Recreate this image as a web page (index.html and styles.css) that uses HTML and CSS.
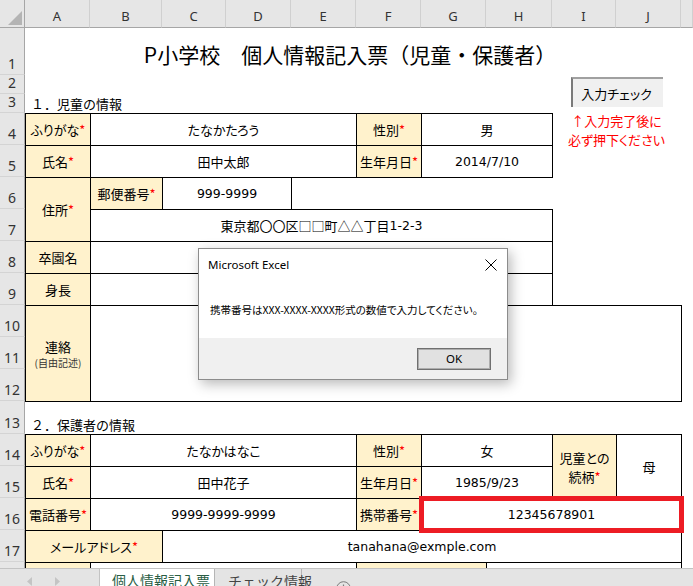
FILE: index.html
```html
<!DOCTYPE html>
<html lang="ja">
<head>
<meta charset="utf-8">
<title>個人情報記入票</title>
<link rel="stylesheet" href="styles.css">
</head>
<body>
<div class="app">
  <div class="sheet">
    <div class="grid">
      <div class="corner c0 rh"><span class="tri"></span></div>
      <div class="colhead cA rh">A</div>
      <div class="colhead cB rh">B</div>
      <div class="colhead cC rh">C</div>
      <div class="colhead cD rh">D</div>
      <div class="colhead cE rh">E</div>
      <div class="colhead cF rh">F</div>
      <div class="colhead cG rh">G</div>
      <div class="colhead cH rh">H</div>
      <div class="colhead cI rh">I</div>
      <div class="colhead cJ rh">J</div>
      <div class="colhead cK rh"></div>

      <div class="rownum c0 r1">1</div>
      <div class="rownum c0 r2">2</div>
      <div class="rownum c0 r3">3</div>
      <div class="rownum c0 r4">4</div>
      <div class="rownum c0 r5">5</div>
      <div class="rownum c0 r6">6</div>
      <div class="rownum c0 r7">7</div>
      <div class="rownum c0 r8">8</div>
      <div class="rownum c0 r9">9</div>
      <div class="rownum c0 r10">10</div>
      <div class="rownum c0 r11">11</div>
      <div class="rownum c0 r12">12</div>
      <div class="rownum c0 r13">13</div>
      <div class="rownum c0 r14">14</div>
      <div class="rownum c0 r15">15</div>
      <div class="rownum c0 r16">16</div>
      <div class="rownum c0 r17">17</div>
      <div class="rownum c0 r18"></div>
      <div class="rownum c0 r19"></div>

      <div class="title cA s10 r1">P小学校　個人情報記入票（児童・保護者）</div>

      <div class="notebox cI s2 r2 t4">
        <div class="checkbtn">入力チェック</div>
        <div class="note">↑入力完了後に<br>必ず押下ください</div>
      </div>

      <div class="section cA s8 r3">１．児童の情報</div>

      <div class="lab cA r4">ふりがな<span class="req">*</span></div>
      <div class="val cB s4 r4">たなかたろう</div>
      <div class="lab cF r4">性別<span class="req">*</span></div>
      <div class="val cG s2 r4">男</div>

      <div class="lab cA r5">氏名<span class="req">*</span></div>
      <div class="val cB s4 r5">田中太郎</div>
      <div class="lab cF r5">生年月日<span class="req">*</span></div>
      <div class="val lat cG s2 r5">2014/7/10</div>

      <div class="lab cA r6 t2">住所<span class="req">*</span></div>
      <div class="lab cB r6">郵便番号<span class="req">*</span></div>
      <div class="val lat cC s2 r6">999-9999</div>
      <div class="val cB s7 r7">東京都〇〇区□□町△△丁目<span class="latin">1-2-3</span></div>

      <div class="lab cA r8">卒園名</div>
      <div class="val cB s7 r8"></div>

      <div class="lab cA r9">身長</div>
      <div class="val cB s7 r9"></div>

      <div class="lab stack cA r10 t3"><span>連絡</span><span class="sub">(自由記述)</span></div>
      <div class="val cB s9 r10 t3"></div>

      <div class="section cA s8 r13">２．保護者の情報</div>

      <div class="lab cA r14">ふりがな<span class="req">*</span></div>
      <div class="val cB s4 r14">たなかはなこ</div>
      <div class="lab cF r14">性別<span class="req">*</span></div>
      <div class="val cG s2 r14">女</div>
      <div class="lab stack cI r14 t2"><span>児童との</span><span>続柄<span class="req">*</span></span></div>
      <div class="val cJ r14 t2">母</div>

      <div class="lab cA r15">氏名<span class="req">*</span></div>
      <div class="val cB s4 r15">田中花子</div>
      <div class="lab cF r15">生年月日<span class="req">*</span></div>
      <div class="val lat cG s2 r15">1985/9/23</div>

      <div class="lab cA r16">電話番号<span class="req">*</span></div>
      <div class="val lat cB s4 r16">9999-9999-9999</div>
      <div class="lab cF r16">携帯番号<span class="req">*</span></div>
      <div class="val lat cG s4 r16">12345678901</div>

      <div class="lab cA s2 r17">メールアドレス<span class="req">*</span></div>
      <div class="val lat cC s8 r17">tanahana@exmple.com</div>

      <div class="lab cA r18"></div>
      <div class="val cB s4 r18"></div>
      <div class="lab cF s2 r18"></div>
      <div class="val cH s3 r18"></div>
    </div>

    <div class="highlight"></div>

    <div class="dialog">
      <div class="dlg-head">
        <span class="dlg-title">Microsoft Excel</span>
        <svg class="dlg-close" width="12" height="12" viewBox="0 0 12 12"><path d="M0.5 0.5 L11.5 11.5 M11.5 0.5 L0.5 11.5" stroke="#000" stroke-width="1" fill="none"/></svg>
      </div>
      <div class="dlg-body">携帯番号はXXX-XXXX-XXXX形式の数値で入力してください。</div>
      <div class="dlg-foot"><div class="okbtn">OK</div></div>
    </div>
  </div>

  <div class="tabbar">
    <div class="tabnav">
      <svg width="6" height="9" viewBox="0 0 6 9"><path d="M5 0 L0 4.5 L5 9 Z" fill="#c4c4c4"/></svg>
      <svg width="6" height="9" viewBox="0 0 6 9"><path d="M1 0 L6 4.5 L1 9 Z" fill="#c4c4c4"/></svg>
    </div>
    <div class="tab active">個人情報記入票</div>
    <div class="tab">チェック情報</div>
    <div class="tabadd">
      <svg width="15" height="15" viewBox="0 0 15 15"><circle cx="7.5" cy="7.5" r="6.8" fill="none" stroke="#7a7a7a" stroke-width="1"/><path d="M7.5 3.5 V11.5 M3.5 7.5 H11.5" stroke="#7a7a7a" stroke-width="1.2"/></svg>
    </div>
  </div>
</div>
</body>
</html>
```

FILE: styles.css
```css
* { box-sizing: border-box; }
html, body { margin: 0; padding: 0; }
body {
  width: 693px;
  height: 586px;
  overflow: hidden;
  background: #fff;
  color: #000;
  font-family: "Noto Sans CJK JP", "Noto Sans", sans-serif;
}
.app { display: flex; flex-direction: column; height: 586px; }
.sheet { position: relative; height: 568px; overflow: hidden; }

.grid {
  display: grid;
  grid-template-columns: 25px 65px 72px 64px 65px 65px 65px 65px 66px 64px 65px 1fr;
  grid-template-rows: 28px 47px 19px 19px repeat(9, 32px) 33px repeat(6, 32px);
}

/* placement */
.c0 { grid-column-start: 1; }
.cA { grid-column-start: 2; }
.cB { grid-column-start: 3; }
.cC { grid-column-start: 4; }
.cD { grid-column-start: 5; }
.cE { grid-column-start: 6; }
.cF { grid-column-start: 7; }
.cG { grid-column-start: 8; }
.cH { grid-column-start: 9; }
.cI { grid-column-start: 10; }
.cJ { grid-column-start: 11; }
.cK { grid-column-start: 12; }
.s2 { grid-column-end: span 2; }
.s3 { grid-column-end: span 3; }
.s4 { grid-column-end: span 4; }
.s7 { grid-column-end: span 7; }
.s8 { grid-column-end: span 8; }
.s9 { grid-column-end: span 9; }
.s10 { grid-column-end: span 10; }
.rh { grid-row-start: 1; }
.r1 { grid-row-start: 2; }
.r2 { grid-row-start: 3; }
.r3 { grid-row-start: 4; }
.r4 { grid-row-start: 5; }
.r5 { grid-row-start: 6; }
.r6 { grid-row-start: 7; }
.r7 { grid-row-start: 8; }
.r8 { grid-row-start: 9; }
.r9 { grid-row-start: 10; }
.r10 { grid-row-start: 11; }
.r11 { grid-row-start: 12; }
.r12 { grid-row-start: 13; }
.r13 { grid-row-start: 14; }
.r14 { grid-row-start: 15; }
.r15 { grid-row-start: 16; }
.r16 { grid-row-start: 17; }
.r17 { grid-row-start: 18; }
.r18 { grid-row-start: 19; }
.r19 { grid-row-start: 20; }
.t2 { grid-row-end: span 2; }
.t3 { grid-row-end: span 3; }
.t4 { grid-row-end: span 4; }

/* headers */
.corner {
  background: #e6e6e6;
  border-right: 1px solid #a6a6a6;
  border-bottom: 1px solid #a6a6a6;
  display: flex;
  justify-content: flex-end;
  align-items: flex-end;
  padding: 0 2px 2px 0;
}
.tri {
  width: 0;
  height: 0;
  border-left: 14px solid transparent;
  border-bottom: 14px solid #b4b4b4;
}
.colhead {
  background: #e6e6e6;
  border-bottom: 1px solid #a6a6a6;
  border-right: 1px solid #d0d0d0;
  font-family: "Noto Sans", sans-serif;
  font-size: 13px;
  color: #333;
  display: flex;
  justify-content: center;
  align-items: center;
  padding-top: 5px;
}
.rownum {
  background: #e6e6e6;
  border-right: 1px solid #a6a6a6;
  border-bottom: 1px solid #d4d4d4;
  font-family: "Noto Sans", sans-serif;
  font-size: 14px;
  line-height: 18px;
  color: #333;
  display: flex;
  justify-content: center;
  align-items: flex-end;
  padding-bottom: 1px;
}

/* content */
.title {
  display: flex;
  align-items: center;
  justify-content: center;
  font-size: 21px;
  padding: 4px 6px 0 0;
}
.section {
  font-size: 13px;
  line-height: 18px;
  align-self: end;
  padding-left: 6px;
}
.lab, .val {
  border: 1px solid #000;
  margin: 0 -1px -1px 0;
  display: flex;
  align-items: center;
  justify-content: center;
  text-align: center;
  font-family: "Noto Sans CJK JP", sans-serif;
  font-size: 13px;
  font-feature-settings: "palt";
  white-space: nowrap;
}
.lab { background: #fff2cc; }
.val { background: #fff; }
.val.lat, .latin {
  font-family: "DejaVu Sans", "Noto Sans CJK JP", sans-serif;
  font-size: 12.5px;
}
.req { color: #ff0000; }
.stack { flex-direction: column; line-height: 19px; }
.sub { font-size: 10px; line-height: 14px; color: #333; }

.notebox {
  display: flex;
  flex-direction: column;
  align-items: center;
}
.checkbtn {
  margin-top: 2px;
  width: 92px;
  height: 30px;
  background: #f0f0f0;
  border-top: 2px solid #a0a0a0;
  border-left: 2px solid #7a7a7a;
  display: flex;
  align-items: center;
  justify-content: center;
  font-size: 13px;
  font-feature-settings: "palt";
  padding-right: 2px;
}
.note {
  margin-top: 4px;
  color: #ff0000;
  font-size: 13px;
  line-height: 19px;
  text-align: center;
  font-feature-settings: "palt";
}

.highlight {
  position: absolute;
  left: 419px;
  top: 496px;
  width: 265px;
  height: 37px;
  border: 5px solid #ed1c24;
}

/* dialog */
.dialog {
  position: absolute;
  left: 198px;
  top: 248px;
  width: 310px;
  height: 132px;
  background: #fff;
  border: 1px solid #8c8c8c;
  box-shadow: 3px 4px 12px rgba(0, 0, 0, 0.28);
  display: flex;
  flex-direction: column;
}
.dlg-head {
  height: 31px;
  display: flex;
  align-items: center;
  justify-content: space-between;
  padding: 0 10px 0 9px;
}
.dlg-title {
  font-family: "Noto Sans", sans-serif;
  font-size: 11.5px;
}
.dlg-body {
  flex: 1;
  display: flex;
  align-items: center;
  padding-left: 11px;
  font-size: 10.5px;
  font-feature-settings: "palt";
  white-space: nowrap;
}
.dlg-foot {
  height: 41px;
  background: #f0f0f0;
  display: flex;
  align-items: center;
  justify-content: flex-end;
  padding-right: 16px;
}
.okbtn {
  width: 74px;
  height: 22px;
  background: #e1e1e1;
  border: 1px solid #707070;
  box-shadow: inset 0 0 0 1px #adadad;
  display: flex;
  align-items: center;
  justify-content: center;
  font-family: "Noto Sans", sans-serif;
  font-size: 11.5px;
}

/* sheet tabs */
.tabbar {
  height: 18px;
  background: #e4e4e4;
  border-top: 1px solid #c3c3c3;
  display: flex;
  overflow: hidden;
}
.tabnav {
  width: 100px;
  display: flex;
  align-items: flex-end;
  gap: 21px;
  padding-left: 27px;
  border-right: 1px solid #c3c3c3;
}
.tab {
  padding: 3px 12px 0 12px;
  font-size: 14px;
  line-height: 18px;
  color: #444;
  border-right: 1px solid #b5b5b5;
  white-space: nowrap;
}
.tab.active {
  width: 115px;
  background: #fff;
  color: #2a5e44;
  margin-top: -1px;
}
.tab:not(.active) { width: 87px; padding-left: 13px; }
.tabadd {
  padding: 8px 0 0 34px;
}
```
